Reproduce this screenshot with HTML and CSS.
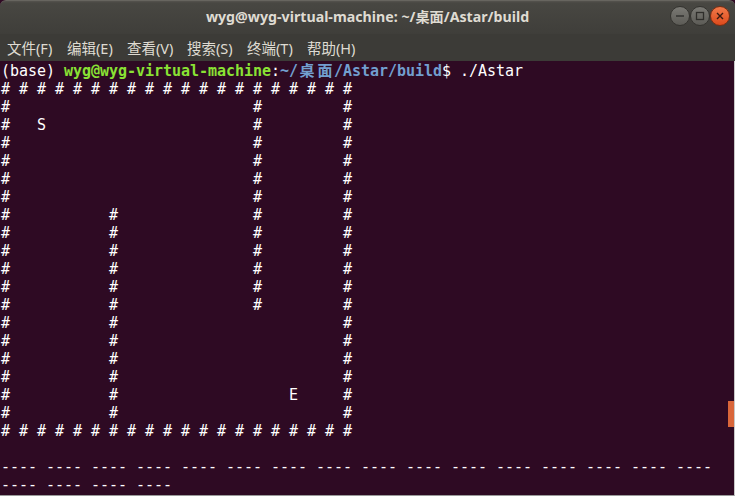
FILE: index.html
```html
<!DOCTYPE html>
<html lang="zh-CN">
<head>
    <meta charset="UTF-8">
    <meta name="viewport" content="width=device-width, initial-scale=1.0">
    <title>wyg@wyg-virtual-machine: ~/桌面/Astar/build</title>
    <link rel="stylesheet" href="styles.css">
</head>
<body>
    <div class="window">
        <div class="titlebar">
            <span></span>
            <span class="title">wyg@wyg-virtual-machine: ~/桌面/Astar/build</span>
            <div class="buttons">
                <span class="btn"><svg width="10" height="10" viewBox="0 0 10 10"><path d="M1 5h8" stroke="#2f2e2b" stroke-width="1.4"/></svg></span>
                <span class="btn"><svg width="10" height="10" viewBox="0 0 10 10"><rect x="1.5" y="1.5" width="7" height="7" fill="none" stroke="#2f2e2b" stroke-width="1.3"/></svg></span>
                <span class="btn close"><svg width="10" height="10" viewBox="0 0 10 10"><path d="M2 2l6 6M8 2l-6 6" stroke="#3a1a10" stroke-width="1.4"/></svg></span>
            </div>
        </div>
        <div class="menubar">
            <span class="menu">文件(F)</span>
            <span class="menu">编辑(E)</span>
            <span class="menu">查看(V)</span>
            <span class="menu">搜索(S)</span>
            <span class="menu">终端(T)</span>
            <span class="menu">帮助(H)</span>
        </div>
        <div class="terminal">
            <div class="screen">
                <div class="line">(base) <b class="user">wyg@wyg-virtual-machine</b>:<b class="path">~/<span class="wide">桌</span><span class="wide">面</span>/Astar/build</b>$ ./Astar</div>
                <div class="line"># # # # # # # # # # # # # # # # # # # #</div>
                <div class="line">#                           #         #</div>
                <div class="line">#   S                       #         #</div>
                <div class="line">#                           #         #</div>
                <div class="line">#                           #         #</div>
                <div class="line">#                           #         #</div>
                <div class="line">#                           #         #</div>
                <div class="line">#           #               #         #</div>
                <div class="line">#           #               #         #</div>
                <div class="line">#           #               #         #</div>
                <div class="line">#           #               #         #</div>
                <div class="line">#           #               #         #</div>
                <div class="line">#           #               #         #</div>
                <div class="line">#           #                         #</div>
                <div class="line">#           #                         #</div>
                <div class="line">#           #                         #</div>
                <div class="line">#           #                         #</div>
                <div class="line">#           #                   E     #</div>
                <div class="line">#           #                         #</div>
                <div class="line"># # # # # # # # # # # # # # # # # # # #</div>
                <div class="line"> </div>
                <div class="line">---- ---- ---- ---- ---- ---- ---- ---- ---- ---- ---- ---- ---- ---- ---- ----</div>
                <div class="line">---- ---- ---- ----</div>
            </div>
            <div class="scrollbar"><div class="thumb"></div></div>
        </div>
    </div>
</body>
</html>
```

FILE: styles.css
```css
html, body {
  margin: 0;
  height: 100%;
  background: #300a24;
  overflow: hidden;
}

.window {
  display: flex;
  flex-direction: column;
  height: 496px;
}

.titlebar {
  height: 34px;
  display: grid;
  grid-template-columns: 1fr auto 1fr;
  align-items: center;
  background: linear-gradient(#55534e 0, #484742 2px, #3f3e3a 100%);
  border-top: 1px solid #67655f;
  border-radius: 6px 6px 0 0;
  box-sizing: border-box;
  padding-bottom: 4px;
}

.title {
  font-family: "Noto Sans", "Noto Sans CJK SC", sans-serif;
  font-weight: bold;
  font-size: 14.2px;
  color: #dfdbd2;
}

.buttons {
  display: flex;
  justify-content: flex-end;
  padding-right: 5px;
}

.btn {
  width: 18px;
  height: 18px;
  border-radius: 50%;
  background: linear-gradient(#7a7974, #5c5b56);
  border: 1px solid #34332f;
  display: flex;
  align-items: center;
  justify-content: center;
}

.btn.close {
  background: linear-gradient(#f27a4a, #dc4a1c);
  border-color: #7a2e12;
}

.menubar {
  height: 27px;
  display: flex;
  align-items: center;
  gap: 13px;
  padding-left: 7px;
  padding-bottom: 1px;
  box-sizing: border-box;
  background: #3c3b37;
  font-family: "Noto Sans", "Noto Sans CJK SC", sans-serif;
  font-size: 14.5px;
  color: #dfdbd2;
}

.menu {
  width: 47px;
  white-space: nowrap;
}

.terminal {
  flex: 1;
  display: flex;
  position: relative;
  background: #2e0a23;
  border-right: 1px solid #c8c8c8;
  border-bottom: 1px solid #9a9a9a;
}

.screen {
  flex: 1;
  padding: 1px 0 0 1px;
  font-family: "DejaVu Sans Mono", "Noto Sans CJK SC", monospace;
  font-size: 15px;
  letter-spacing: -0.03px;
  line-height: 18px;
  color: #ffffff;
  overflow: hidden;
}

.line {
  height: 18px;
  white-space: pre;
}

.user {
  color: #8ae234;
}

.path {
  color: #729fcf;
}

.wide {
  display: inline-block;
  width: 18px;
  height: 18px;
  line-height: 18px;
  vertical-align: top;
  text-align: center;
}

.scrollbar {
  width: 6px;
}

.thumb {
  position: absolute;
  right: 0;
  top: 340px;
  width: 6px;
  height: 26px;
  background: #d9663a;
}
```
